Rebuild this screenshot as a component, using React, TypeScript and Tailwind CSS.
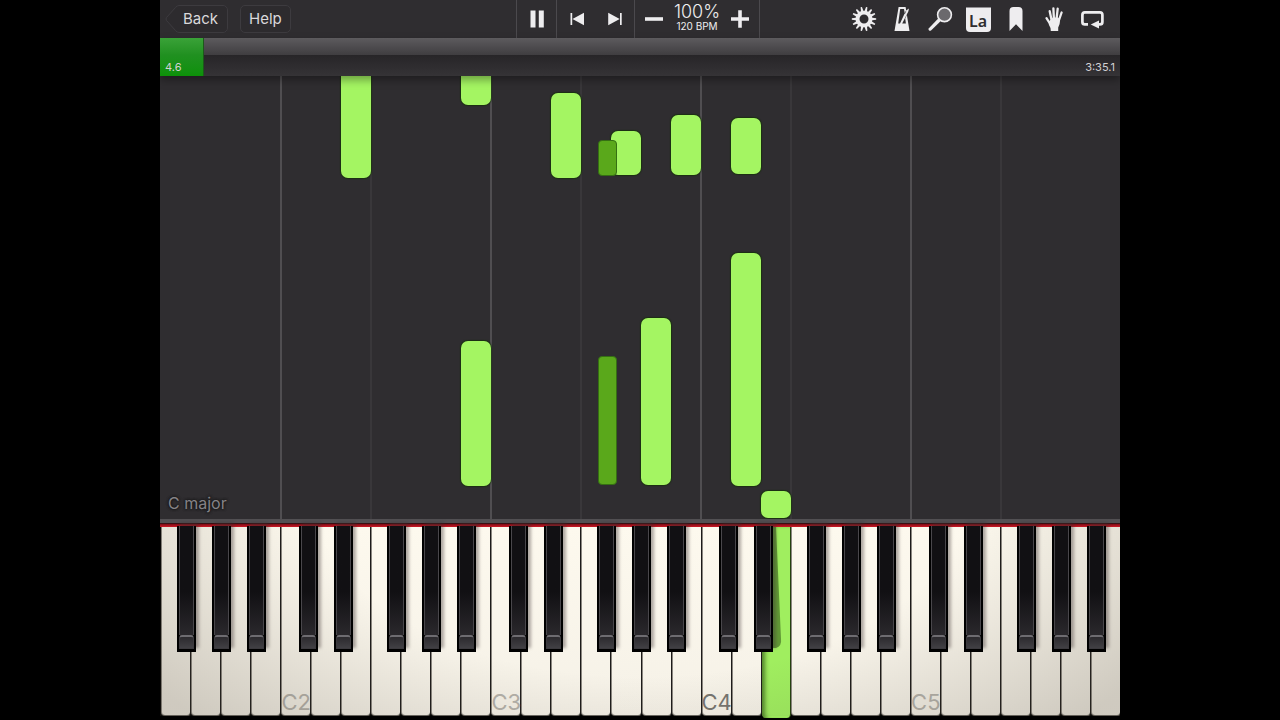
import { useState } from "react";
import type { ReactNode } from "react";

const WHITE_KEYS = 32;
const PRESSED_KEY = 20;

// index of the leftmost white key of each octave
const OCTAVES = [
  { key: 4, label: "C2" },
  { key: 11, label: "C3" },
  { key: 18, label: "C4" },
  { key: 25, label: "C5" },
];

const SPLITS = [7, 14, 21, 28];

// left edge of every black key, counted in white keys
const BLACK_KEYS = [
  0.53, 1.7, 2.85,
  4.6, 5.77, 7.53, 8.7, 9.85,
  11.6, 12.77, 14.53, 15.7, 16.85,
  18.6, 19.77, 21.53, 22.7, 23.85,
  25.6, 26.77, 28.53, 29.7, 30.85,
];

type Note = { key: number; start: number; length: number; sharp?: boolean };

// start and length are distances above the hit line
const NOTES: Note[] = [
  { key: 6, start: 341, length: 120 },
  { key: 10, start: 414, length: 60 },
  { key: 13, start: 341, length: 85 },
  { key: 15, start: 344, length: 44 },
  { key: 14.56, start: 343, length: 36, sharp: true },
  { key: 17, start: 344, length: 60 },
  { key: 19, start: 345, length: 56 },
  { key: 10, start: 33, length: 145 },
  { key: 14.56, start: 34, length: 129, sharp: true },
  { key: 16, start: 34, length: 167 },
  { key: 19, start: 33, length: 233 },
  { key: 20, start: 1, length: 27 },
];

const pct = (keys: number) => `${(keys / WHITE_KEYS) * 100}%`;

function gearPath(teeth: number, outer: number, inner: number) {
  const pts: string[] = [];
  const step = (Math.PI * 2) / teeth;
  for (let i = 0; i < teeth; i++) {
    const a = (i + 0.5) * step - Math.PI / 2;
    for (const [r, d] of [[inner, -0.32], [outer, -0.13], [outer, 0.13], [inner, 0.32]]) {
      pts.push(`${(13 + r * Math.cos(a + d * step)).toFixed(2)} ${(13 + r * Math.sin(a + d * step)).toFixed(2)}`);
    }
  }
  return `M${pts.join("L")}Z`;
}

function Icon({ children }: { children: ReactNode }) {
  return (
    <svg viewBox="0 0 26 26" className="size-[26px] fill-current" aria-hidden="true">
      {children}
    </svg>
  );
}

function ToolButton({ label, children }: { label: string; children: ReactNode }) {
  return (
    <button type="button" aria-label={label} className="flex h-full w-[38px] items-center justify-center">
      {children}
    </button>
  );
}

function Toolbar() {
  const [playing, setPlaying] = useState(true);

  return (
    <header className="flex h-[38px] shrink-0 items-center bg-[#2f2d30] text-[#eeedef]">
      <div className="flex flex-1 items-center gap-3 pl-[5px]">
        <button type="button" className="relative h-7 w-[63px] pl-2 text-[15px] text-[#dad9db]">
          <svg viewBox="0 0 63 28" className="absolute inset-0 size-full" fill="#2d2b2e" stroke="#3d3b3f" aria-hidden="true">
            <path d="M14 .5H58a4.500 4.500 0 0 1 4.500 4.500V23a4.500 4.500 0 0 1-4.500 4.500H14Q12 27.500 10.500 25.500L1.500 15.500Q.5 14 1.500 12.500L10.500 2.500Q12 .5 14 .5Z" />
          </svg>
          <span className="relative">Back</span>
        </button>
        <button type="button" className="h-7 rounded-[5px] border border-[#3d3b3f] bg-[#2d2b2e] px-2 text-[15px] text-[#dad9db]">
          Help
        </button>
      </div>

      <div className="flex h-full divide-x divide-[#4b494d] border-x border-[#4b494d]">
        <button
          type="button"
          aria-label={playing ? "Pause" : "Play"}
          onClick={() => setPlaying(p => !p)}
          className="flex w-10 items-center justify-center"
        >
          <Icon>
            {playing ? <path d="M6.500 4.500h5v17h-5zM14.800 4.500h5v17h-5z" /> : <path d="M7 4.500L21 13L7 21.500Z" />}
          </Icon>
        </button>
        <div className="flex pl-px">
          <ToolButton label="Previous">
            <Icon><path d="M6.500 7h1.700v12H6.500zM8.500 13L20 6.800V19.200Z" /></Icon>
          </ToolButton>
          <ToolButton label="Next">
            <Icon><path d="M18 7h1.700v12H18zM17.700 13L6.200 6.800V19.200Z" /></Icon>
          </ToolButton>
        </div>
        <div className="flex">
          <ToolButton label="Slower">
            <Icon><path d="M4 11.200h18v3.600H4z" /></Icon>
          </ToolButton>
          <div className="flex w-12 flex-col items-center justify-center whitespace-nowrap">
            <span className="text-[18px] leading-[18px] font-light">100%</span>
            <span className="pb-1 text-[10px] leading-[10px]">120 BPM</span>
          </div>
          <ToolButton label="Faster">
            <Icon><path d="M4 11.200h7.200V4.200h3.600v7H22v3.600h-7.200v7h-3.600v-7H4z" /></Icon>
          </ToolButton>
        </div>
      </div>

      <div className="flex h-full flex-1 justify-end pr-[9px]">
        <ToolButton label="Settings">
          <Icon><path fillRule="evenodd" d={`${gearPath(14, 12.2, 8.4)}M13 8.5a4.500 4.500 0 1 0 0 9a4.500 4.500 0 0 0 0-9Z`} /></Icon>
        </ToolButton>
        <ToolButton label="Metronome">
          <Icon>
            <path fillRule="evenodd" d="M9.600 1H16.600L17.300 5L15.900 8L15 3H11.200L9.200 17.500H11L17 4.500L20 2.500L19.300 5.500L13.200 17.500H16.900L16.200 12.500L17.900 9L20.500 25H5.500Z" />
          </Icon>
        </ToolButton>
        <ToolButton label="Zoom">
          <Icon>
            <circle cx="17.500" cy="8.700" r="6.900" fill="#6b696d" stroke="currentColor" strokeWidth="1.600" />
            <path d="M11.200 12.400L13.800 15L4 24.500Q2.900 25.300 1.900 24.300Q1 23.200 1.900 22.200Z" />
          </Icon>
        </ToolButton>
        <ToolButton label="Note names">
          <span className="flex size-[25px] items-end justify-center rounded-b-[4px] border-t border-[#8f8d91] bg-[#eeedef] pb-[3px] font-['Noto_Sans'] text-[16px] leading-[16px] font-semibold text-[#2f2d30]">
            La
          </span>
        </ToolButton>
        <ToolButton label="Bookmarks">
          <Icon><path d="M6.500 5Q6.500 1 10.500 1H15.500Q19.500 1 19.500 5V25L13 18.300L6.500 25Z" /></Icon>
        </ToolButton>
        <ToolButton label="Hands">
          <Icon>
            <path
              fill="none"
              stroke="currentColor"
              strokeWidth="2.300"
              strokeLinecap="round"
              d="M5.500 12.200L9.500 18.500M8.700 5.200L11 16M12.400 2.400L13 15M16.700 2.600L15.300 15M20.600 6.500L17 17"
            />
            <path d="M8 15.500L9.800 13.500L12 11.500H17L18.900 13.200Q19.200 18.500 17.200 21.500V25H9.800Q9.800 21.500 7.800 18.500Z" />
          </Icon>
        </ToolButton>
        <ToolButton label="Loop">
          <Icon>
            <path fill="none" stroke="currentColor" strokeWidth="2.700" d="M9 18.400H5.900Q3.400 18.400 3.400 15.900V8.900Q3.400 6.400 5.900 6.400H20.900Q23.400 6.400 23.400 8.900V15.900Q23.400 18.400 20.900 18.400H18" />
            <path d="M11.700 18.400L20 14.400V22.400Z" />
          </Icon>
        </ToolButton>
      </div>
    </header>
  );
}

function Timeline() {
  return (
    <div className="relative z-10 flex h-[38px] shrink-0 items-end justify-between bg-linear-to-b from-[#5d5b5e] from-0% via-[#403e41] via-44% to-[#353336] text-[11px] leading-[18px] text-[#d2d1d3] shadow-[0_4px_8px_rgba(0,0,0,0.35)]">
      <div className="absolute inset-x-0 top-[17px] bottom-0 bg-linear-to-b from-[#272528] to-[#353336]" />
      <div className="relative flex h-full w-[4.6%] items-end border-r border-[#1c5a1a] bg-linear-to-b from-[#3aa238] from-0% via-[#209020] via-45% to-[#0c9108] pl-[5px]">
        4.6
      </div>
      <span className="relative pr-[5px]">3:35.1</span>
    </div>
  );
}

function NoteRoll() {
  return (
    <main className="relative min-h-0 flex-1 overflow-hidden bg-[#2f2d30]">
      <div className="absolute inset-y-0 -right-px left-px">
        {OCTAVES.map(o => (
          <div key={o.label} className="absolute inset-y-0 -ml-px w-[2px] bg-[#504e51]" style={{ left: pct(o.key) }} />
        ))}
        {SPLITS.map(k => (
          <div key={k} className="absolute inset-y-0 -ml-px w-[2px] bg-[#39373a]" style={{ left: pct(k) }} />
        ))}
        {NOTES.map((n, i) => (
          <div
            key={i}
            className={
              n.sharp
                ? "absolute rounded-[4px] border border-[#356f13] bg-[#5aa81b]"
                : "absolute rounded-[7px] bg-[#a4f562] shadow-[0_0_1px_1px_rgba(20,50,5,0.7)]"
            }
            style={{ left: pct(n.key), bottom: n.start, height: n.length, width: pct(n.sharp ? 0.63 : 1) }}
          />
        ))}
      </div>
      <span className="absolute bottom-1 left-2 text-[16px] leading-6 text-[#858387] [text-shadow:0_0_3px_#111,0_0_3px_#111]">
        C major
      </span>
    </main>
  );
}

function Keyboard() {
  return (
    <section className="shrink-0 overflow-hidden bg-black" aria-label="Keyboard">
      <div className="h-1 bg-[#525053]" />
      <div className="h-[4px] border-t border-[#3a1014] bg-linear-to-b from-[#7c0c15] to-[#cf1825]" />
      <div className="relative -mr-px flex h-[193px] pb-1 pl-px">
        {Array.from({ length: WHITE_KEYS }, (_, i) => {
          const octave = OCTAVES.find(o => o.key === i);
          const pressed = i === PRESSED_KEY;
          return (
            <button
              key={i}
              type="button"
              aria-label={octave ? octave.label : `White key ${i + 1}`}
              className={
                pressed
                  ? "relative -mb-[2px] w-0 flex-1 rounded-b-[4px] border-r border-[#24400f] bg-[#a0ee5f] shadow-[inset_5px_0_4px_-2px_rgba(30,60,10,0.6)]"
                  : "relative flex w-0 flex-1 items-end justify-center rounded-b-[4px] border-x border-b border-r-[#1d1b1a] border-b-[#6b6862] border-l-[#8b8780] bg-linear-to-b from-[#fdf9ee] to-[#f5f1e7]"
              }
            >
              {octave && (
                <span className={octave.label === "C4" ? "text-[22px] leading-[26px] text-[#777570]" : "text-[22px] leading-[26px] text-[#b4b1aa]"}>
                  {octave.label}
                </span>
              )}
            </button>
          );
        })}
        <div className="pointer-events-none absolute inset-x-0 top-0 bottom-1 bg-[radial-gradient(ellipse_62%_180%_at_50%_-20%,transparent_55%,rgba(70,62,50,0.22)_100%)]" />
        <div className="absolute inset-y-0 right-0 left-px">
          {/* cast shadow on the key that is held down */}
          <svg viewBox="0 0 12 122" preserveAspectRatio="none" className="absolute top-0 h-[122px] w-3" style={{ left: pct(20.38) }} aria-hidden="true">
            <path d="M0 0H4L9 112Q10 119 4 121H0Z" fill="#3f6a20" opacity=".65" />
          </svg>
          {BLACK_KEYS.map((left, i) => (
            <button
              key={left}
              type="button"
              aria-label={`Black key ${i + 1}`}
              className="absolute -top-px flex h-[126px] flex-col bg-black px-[2px] pb-[3px] shadow-[3px_-4px_3px_rgba(60,50,50,0.4)]"
              style={{ left: pct(left), width: pct(0.635) }}
            >
              <span className="w-full flex-1 border-x border-[#49474b] bg-linear-to-b from-[#111013] from-60% to-[#2a282c]" />
              <span className="h-[14px] w-full rounded-t-[3px] border border-t-2 border-[#3c3a3e] border-t-[#6e6c71] bg-linear-to-b from-[#2c2a2e] to-[#414044]" />
            </button>
          ))}
        </div>
      </div>
    </section>
  );
}

export default function App() {
  return (
    <div className="flex h-screen justify-center bg-black font-[Inter,'Liberation_Sans',sans-serif]">
      <div className="flex aspect-[4/3] h-full flex-col overflow-hidden">
        <Toolbar />
        <Timeline />
        <NoteRoll />
        <Keyboard />
      </div>
    </div>
  );
}
